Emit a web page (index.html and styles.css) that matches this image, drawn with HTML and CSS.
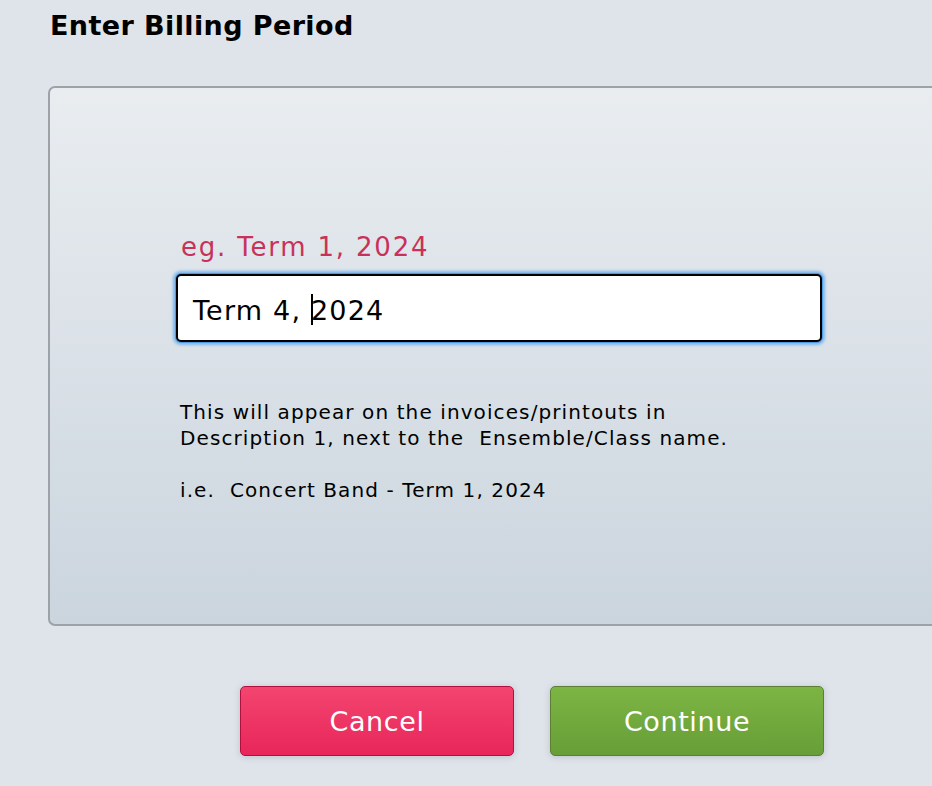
FILE: index.html
```html
<!DOCTYPE html>
<html>
<head>
<meta charset="utf-8">
<link rel="stylesheet" href="styles.css">
</head>
<body>
<div class="page">
  <h1 class="title">Enter Billing Period</h1>
  <div class="panel">
    <div class="hint">eg. Term 1, 2024</div>
    <div class="input"><span>Term 4, </span><span class="caret"></span><span>2024</span></div>
    <div class="desc">
      <p>This will appear on the invoices/printouts in<br>Description 1, next to the&nbsp; Ensemble/Class name.</p>
      <p>i.e.&nbsp; Concert Band - Term 1, 2024</p>
    </div>
  </div>
  <div class="actions">
    <button class="btn cancel">Cancel</button>
    <button class="btn continue">Continue</button>
  </div>
</div>
</body>
</html>
```
FILE: styles.css
```css
html, body {
  margin: 0;
  padding: 0;
  background: #dfe3ea;
  font-family: "DejaVu Sans", Verdana, sans-serif;
  overflow: hidden;
}
.page {
  width: 932px;
  height: 786px;
  padding: 0 0 0 48px;
  box-sizing: border-box;
}
.title {
  margin: 0 0 0 2px;
  padding-top: 11px;
  font-size: 27px;
  line-height: 30px;
  font-weight: bold;
  color: #000;
  letter-spacing: 0.4px;
}
.panel {
  margin-top: 45px;
  width: 900px;
  height: 540px;
  box-sizing: border-box;
  border: 2px solid #9ca2a8;
  border-radius: 7px;
  background: linear-gradient(to bottom, #e9edf0 0%, #dde3e9 40%, #cbd5de 100%);
  padding: 144px 0 0 126px;
}
.hint {
  color: #c8325a;
  font-size: 26px;
  line-height: 30px;
  margin-left: 5px;
  letter-spacing: 1.8px;
}
.input {
  margin-top: 12px;
  width: 646px;
  height: 68px;
  box-sizing: border-box;
  border: 2px solid #000;
  border-radius: 5px;
  background: #fff;
  box-shadow: 0 0 0 1px #4d9be2, 0 0 3px 3px #7db7ee;
  font-size: 27px;
  line-height: 64px;
  padding-left: 15px;
  padding-top: 6px;
  color: #000;
  display: flex;
  align-items: center;
  white-space: pre;
  letter-spacing: 1.2px;
}
.caret {
  display: inline-block;
  width: 2px;
  height: 31px;
  background: #000;
  margin-right: -2px;
  margin-top: -4px;
}
.desc {
  margin-top: 57px;
  margin-left: 4px;
  font-size: 20px;
  line-height: 26px;
  color: #000;
  letter-spacing: 1.1px;
}
.desc p {
  margin: 0 0 26px 0;
}
.actions {
  margin-top: 60px;
  margin-left: 192px;
  display: flex;
  gap: 36px;
}
.btn {
  width: 274px;
  height: 70px;
  border-radius: 5px;
  font-family: "DejaVu Sans", Verdana, sans-serif;
  font-size: 27px;
  color: #fff;
  box-shadow: 0 1px 6px rgba(90, 100, 120, 0.25);
  padding: 0;
  letter-spacing: 0.6px;
}
.cancel {
  border: 1.5px solid #b0103e;
  background: linear-gradient(to bottom, #f3456f, #e8265a);
}
.continue {
  border: 1.5px solid #5c7f36;
  background: linear-gradient(to bottom, #7db544, #679e37);
}
```
